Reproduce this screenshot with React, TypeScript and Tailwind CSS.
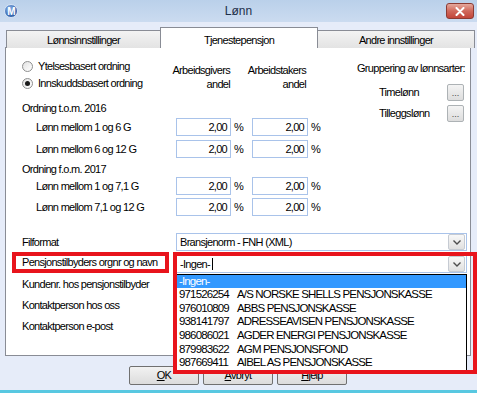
import React from "react";

const providers = [
  { nr: "971526254", name: "A/S NORSKE SHELLS PENSJONSKASSE" },
  { nr: "976010809", name: "ABBS PENSJONSKASSE" },
  { nr: "938141797", name: "ADRESSEAVISEN PENSJONSKASSE" },
  { nr: "986086021", name: "AGDER ENERGI PENSJONSKASSE" },
  { nr: "879983622", name: "AGM PENSJONSFOND" },
  { nr: "987669411", name: "AIBEL AS PENSJONSKASSE" },
];

const Radio = ({ checked, label }: { checked?: boolean; label: string }) => (
  <div className="flex h-[16px] items-center gap-[5px]">
    <span className="flex h-[11px] w-[11px] items-center justify-center rounded-full border border-[#8e8f8f] bg-gradient-to-br from-[#e2e2e2] to-white">
      {checked && <span className="h-[5px] w-[5px] rounded-full bg-[#1a1a1a]" />}
    </span>
    <span>{label}</span>
  </div>
);

const Pct = ({ w }: { w: string }) => (
  <div className={`flex h-[18px] items-center justify-end border border-[#a9c3ea] bg-white pr-[3px] ${w}`}>
    2,00
  </div>
);

const PctRow = ({ label, h }: { label: string; h: string }) => (
  <div className={`flex items-start ${h}`}>
    <div className="w-[154px] pl-[14px] leading-[18px]">{label}</div>
    <Pct w="w-[55px]" />
    <span className="w-[21px] pl-[3px] leading-[18px]">%</span>
    <Pct w="w-[56px]" />
    <span className="pl-[3px] leading-[18px]">%</span>
  </div>
);

const DropBtn = () => (
  <span className="flex h-[16px] w-[17px] items-center justify-center rounded-[2px] border border-[#c6cbd3] bg-gradient-to-b from-[#f8f8f8] to-[#e0e0e0]">
    <svg width="8" height="5" viewBox="0 0 8 5">
      <path d="M0.5 0.5 L4 4 L7.5 0.5" fill="none" stroke="#4d4d4d" strokeWidth="1.4" />
    </svg>
  </span>
);

const DotsBtn = () => (
  <span className="flex h-[17px] w-[17px] items-end justify-center rounded-[2px] border border-[#adb2b5] bg-gradient-to-b from-[#f4f4f4] to-[#dddddd] pb-[2px] text-[9px] leading-[9px] tracking-normal text-[#444]">
    ...
  </span>
);

const WinButton = ({ children }: { children: React.ReactNode }) => (
  <div className="flex h-[19px] w-[70px] items-center justify-center rounded-[2px] border border-[#707070] bg-gradient-to-b from-[#f2f2f2] to-[#dcdcdc]">
    {children}
  </div>
);

export default function App() {
  return (
    <div className="relative flex h-[393px] w-[477px] flex-col overflow-hidden whitespace-nowrap border-b-[3px] border-b-[#58c8e1] bg-[#e6ecf9] font-['Liberation_Sans',sans-serif] text-[11px] tracking-[-0.7px] text-black">
      {/* title bar */}
      <div className="grid h-[22px] grid-cols-[1fr_auto_1fr] items-center bg-gradient-to-b from-[#bad0ea] to-[#cbdbf0]">
        <div className="pl-[4px]">
          <svg width="14" height="14" viewBox="0 0 14 14">
            <defs>
              <radialGradient id="ic" cx="0.4" cy="0.35" r="0.7">
                <stop offset="0" stopColor="#8fb6ea" />
                <stop offset="1" stopColor="#1d4f9c" />
              </radialGradient>
            </defs>
            <circle cx="7" cy="7" r="6.5" fill="url(#ic)" stroke="#d9e6f7" strokeWidth="1" />
            <text x="7" y="10.5" textAnchor="middle" fontSize="10" fontWeight="bold" fill="#ffffff" fontFamily="Liberation Sans, sans-serif">
              M
            </text>
          </svg>
        </div>
        <div className="text-[12px] tracking-normal text-[#1e2f4a]">Lønn</div>
        <div className="flex justify-end pr-[3px]">
          <div className="flex h-[16px] w-[28px] items-center justify-center rounded-[3px] border border-[#8c3b33] bg-gradient-to-b from-[#e4a89d] via-[#d0685b] to-[#c2453a]">
            <svg width="10" height="9" viewBox="0 0 10 9">
              <path d="M1.5 1 L8.5 8 M8.5 1 L1.5 8" stroke="#ffffff" strokeWidth="2" strokeLinecap="round" />
            </svg>
          </div>
        </div>
      </div>

      {/* tabs */}
      <div className="relative z-10 mt-[5px] -mb-px flex h-[21px] items-end pl-[6px]">
        <div className="flex h-[18px] w-[155px] items-center justify-center border border-b-0 border-[#898c95] bg-gradient-to-b from-[#f3f3f3] to-[#e3e3e3] pt-[1px]">
          Lønnsinnstillinger
        </div>
        <div className="-mx-px flex h-[21px] w-[158px] items-start justify-center border border-b-0 border-[#898c95] bg-white pt-[4px]">
          Tjenestepensjon
        </div>
        <div className="flex h-[18px] w-[158px] items-center justify-center border border-b-0 border-[#898c95] bg-gradient-to-b from-[#f3f3f3] to-[#e3e3e3] pt-[1px]">
          Andre innstillinger
        </div>
      </div>

      {/* panel */}
      <div className="ml-[5px] flex h-[309px] w-[466px] flex-col border border-[#898c95] bg-white pl-[16px] pt-[10px]">
        <div className="flex">
          <div className="flex w-[335px] flex-col">
            <div className="flex h-[40px]">
              <div className="flex w-[154px] flex-col gap-[1px]">
                <Radio label="Ytelsesbasert ordning" />
                <Radio checked label="Innskuddsbasert ordning" />
              </div>
              <div className="flex w-[54px] flex-col items-end pt-[5px] leading-[14px]">
                <span>Arbeidsgivers</span>
                <span>andel</span>
              </div>
              <div className="w-[22px]" />
              <div className="flex w-[54px] flex-col items-end pt-[5px] leading-[14px]">
                <span>Arbeidstakers</span>
                <span>andel</span>
              </div>
            </div>
            <div className="h-[20px] leading-[20px]">Ordning t.o.m. 2016</div>
            <PctRow label="Lønn mellom 1 og 6 G" h="h-[22px]" />
            <PctRow label="Lønn mellom 6 og 12 G" h="h-[22px]" />
            <div className="h-[15px] leading-[15px]">Ordning f.o.m. 2017</div>
            <PctRow label="Lønn mellom 1 og 7,1 G" h="h-[21px]" />
            <PctRow label="Lønn mellom 7,1 og 12 G" h="h-[21px]" />
          </div>
          <div className="flex flex-col pt-[3px]">
            <div className="leading-[14px]">Gruppering av lønnsarter:</div>
            <div className="mt-[9px] flex h-[17px] items-center">
              <span className="w-[90px] pl-[22px]">Timelønn</span>
              <DotsBtn />
            </div>
            <div className="mt-[4px] flex h-[17px] items-center">
              <span className="w-[90px] pl-[22px]">Tilleggslønn</span>
              <DotsBtn />
            </div>
          </div>
        </div>

        <div className="mt-[14px] flex h-[22px] items-start">
          <div className="w-[154px] leading-[18px]">Filformat</div>
          <div className="flex h-[18px] w-[291px] items-center justify-between border border-[#a9c3ea] bg-white pl-[3px] pr-[1px]">
            <span>Bransjenorm - FNH (XML)</span>
            <DropBtn />
          </div>
        </div>
        <div className="flex h-[19px] items-start">
          <div className="w-[154px] leading-[15px]">Pensjonstilbyders orgnr og navn</div>
          <div className="flex h-[18px] w-[291px] items-center justify-between border border-[#a9c3ea] bg-white pl-[3px] pr-[1px]">
            <span className="flex items-center">
              -Ingen-
              <span className="ml-[2px] h-[12px] w-px bg-black" />
            </span>
            <DropBtn />
          </div>
        </div>
        <div className="h-[21px] leading-[21px]">Kundenr. hos pensjonstilbyder</div>
        <div className="h-[21px] leading-[21px]">Kontaktperson hos oss</div>
        <div className="h-[21px] leading-[21px]">Kontaktperson e-post</div>
      </div>

      {/* buttons */}
      <div className="mt-[10px] flex gap-[4px] pl-[129px]">
        <WinButton>
          <span>
            <u>O</u>K
          </span>
        </WinButton>
        <WinButton>
          <span>
            <u>A</u>vbryt
          </span>
        </WinButton>
        <WinButton>
          <span>
            <u>H</u>jelp
          </span>
        </WinButton>
      </div>

      {/* open dropdown list */}
      <div className="absolute left-[176px] top-[274px] z-20 flex w-[291px] flex-col border border-black bg-white text-[11.5px] tracking-[-0.85px]">
        <div className="flex h-[13px] items-center bg-[#3399ff] pl-[2px] text-white">-Ingen-</div>
        {providers.map((p) => (
          <div key={p.nr} className="flex h-[13.6px] items-center pl-[2px]">
            <span className="w-[58px]">{p.nr}</span>
            <span>{p.name}</span>
          </div>
        ))}
      </div>

      {/* red highlight boxes */}
      <div className="absolute left-[12px] top-[252px] z-30 h-[21px] w-[157px] border-[4px] border-[#e8141c]" />
      <div className="absolute left-[173px] top-[252px] z-30 h-[122px] w-[304px] border-[4px] border-[#e8141c]" />
    </div>
  );
}
